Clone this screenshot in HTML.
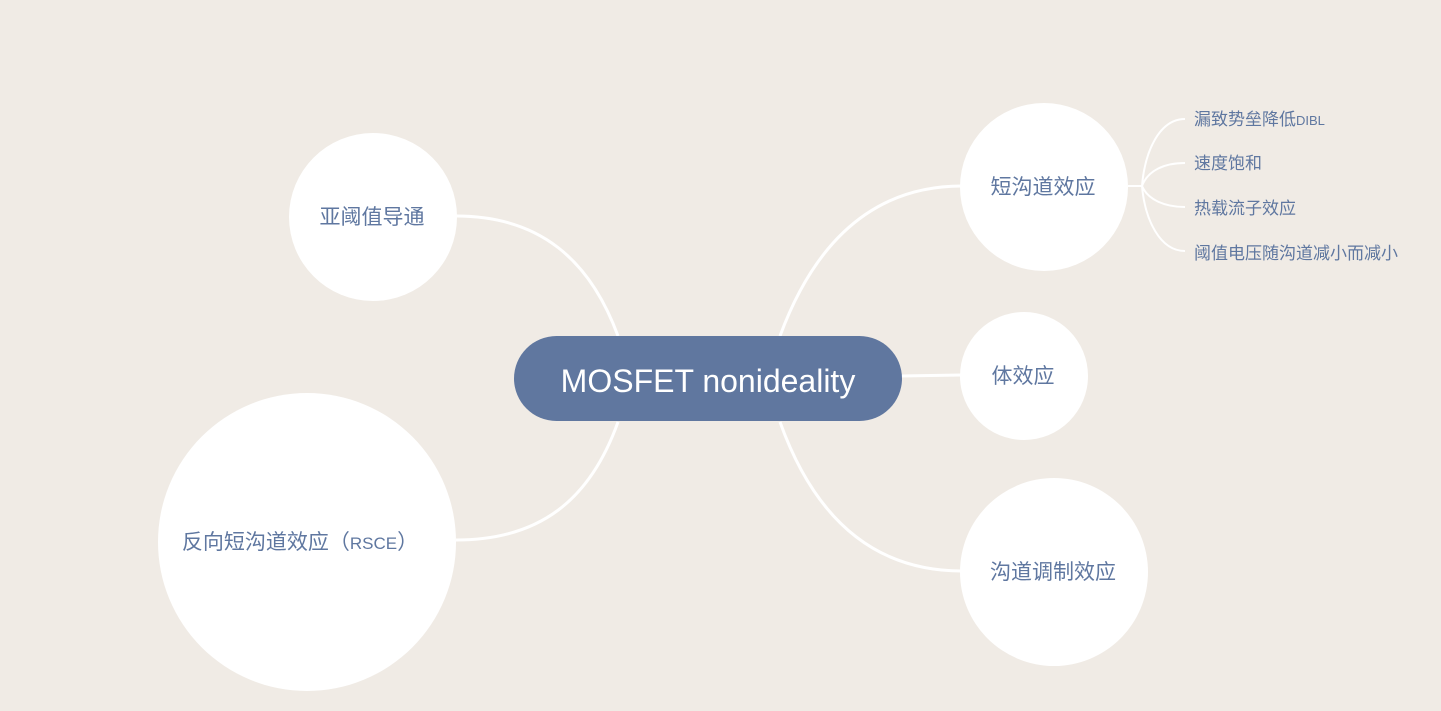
<!DOCTYPE html>
<html><head><meta charset="utf-8"><style>
html,body{margin:0;padding:0;width:1441px;height:711px;overflow:hidden;background:#f0ebe5;}
svg{position:absolute;left:0;top:0}
.t{font-family:"Liberation Sans","Noto Sans CJK SC",sans-serif;fill:#5f77a0}
</style></head><body>
<svg width="1441" height="711" xmlns="http://www.w3.org/2000/svg">
<g fill="none" stroke="#fff" stroke-width="3">
<path d="M618,336 C590,260 540,216 456,216"/>
<path d="M618,422 C590,500 540,540 456,540"/>
<path d="M780,336 C808,260 860,186 962,186"/>
<path d="M780,422 C808,500 860,571 962,571"/>
<path d="M900,376 L962,375"/>
</g>
<g fill="none" stroke="#fff" stroke-width="2">
<path d="M1128,186 L1142,186"/>
<path d="M1142,186 C1145,150 1160,119 1185,119"/>
<path d="M1142,186 C1148,170 1165,163 1185,163"/>
<path d="M1142,186 C1148,200 1165,207 1185,207"/>
<path d="M1142,186 C1145,220 1160,251 1185,251"/>
</g>
<rect x="514" y="336" width="388" height="85" rx="42.5" fill="#60779f"/>
<text x="708" y="392" text-anchor="middle" font-family="Liberation Sans,sans-serif" font-size="32" fill="#fff">MOSFET nonideality</text>
<circle cx="373" cy="217" r="84" fill="#fff"/>
<circle cx="307" cy="542" r="149" fill="#fff"/>
<circle cx="1044" cy="187" r="84" fill="#fff"/>
<circle cx="1024" cy="376" r="64" fill="#fff"/>
<circle cx="1054" cy="572" r="94" fill="#fff"/>
<text class="t" x="372" y="224" font-size="21" text-anchor="middle">亚阈值导通</text>
<text class="t" x="300" y="549" font-size="21" text-anchor="middle">反向短沟道效应（<tspan font-size="17">RSCE</tspan>）</text>
<text class="t" x="1043" y="194" font-size="21" text-anchor="middle">短沟道效应</text>
<text class="t" x="1023" y="383" font-size="21" text-anchor="middle">体效应</text>
<text class="t" x="1053" y="579" font-size="21" text-anchor="middle">沟道调制效应</text>
<text class="t" x="1194" y="125" font-size="17">漏致势垒降低<tspan font-size="13">DIBL</tspan></text>
<text class="t" x="1194" y="169" font-size="17">速度饱和</text>
<text class="t" x="1194" y="214" font-size="17">热载流子效应</text>
<text class="t" x="1194" y="259" font-size="17">阈值电压随沟道减小而减小</text>
</svg>
</body></html>
